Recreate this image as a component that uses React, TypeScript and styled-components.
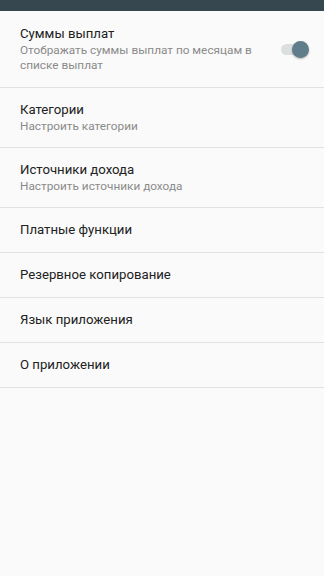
import React from 'react'
import styled, { createGlobalStyle } from 'styled-components'

type Setting = {
  title: string
  summary?: string
  toggle?: boolean
}

const settings: Setting[] = [
  {
    title: 'Суммы выплат',
    summary: 'Отображать суммы выплат по месяцам в списке выплат',
    toggle: true,
  },
  { title: 'Категории', summary: 'Настроить категории' },
  { title: 'Источники дохода', summary: 'Настроить источники дохода' },
  { title: 'Платные функции' },
  { title: 'Резервное копирование' },
  { title: 'Язык приложения' },
  { title: 'О приложении' },
]

const App: React.FC = () => {
  return (
    <>
      <GlobalStyle />
      <Screen>
        <StatusBar />
        <List>
          {settings.map((item) => (
            <Row key={item.title} $withSwitch={!!item.toggle}>
              <Texts>
                <Title>{item.title}</Title>
                {item.summary && <Summary>{item.summary}</Summary>}
              </Texts>
              {item.toggle && (
                <Switch>
                  <Track />
                  <Knob />
                </Switch>
              )}
            </Row>
          ))}
        </List>
      </Screen>
    </>
  )
}

export default App

const GlobalStyle = createGlobalStyle`
  html, body {
    margin: 0;
    padding: 0;
    background: #fafafa;
  }
  body {
    font-family: Roboto, 'Noto Sans', 'Liberation Sans', sans-serif;
  }
`

const Screen = styled.div`
  width: 324px;
  height: 576px;
  background: #fafafa;
  display: flex;
  flex-direction: column;
`

const StatusBar = styled.div`
  height: 11px;
  background: #37474f;
  flex-shrink: 0;
`

const List = styled.ul`
  list-style: none;
  margin: 0;
  padding: 0;
`

const Row = styled.li<{ $withSwitch: boolean }>`
  display: flex;
  align-items: center;
  padding: ${(p) => (p.$withSwitch ? '14px 15px 14px 20px' : '13px 15px 13px 20px')};
  border-bottom: 1px solid #e2e2e2;
`

const Texts = styled.div`
  flex: 1;
  min-width: 0;
  padding-right: 18px;
`

const Title = styled.div`
  font-size: 13.2px;
  line-height: 18px;
  color: #212121;
`

const Summary = styled.div`
  font-size: 11.8px;
  line-height: 15px;
  color: #8a8a8a;
`

const Switch = styled.div`
  position: relative;
  width: 28px;
  height: 17px;
  flex-shrink: 0;
`

const Track = styled.div`
  position: absolute;
  left: 0;
  top: 3px;
  width: 27px;
  height: 11px;
  border-radius: 6px;
  background: #dcdfe0;
`

const Knob = styled.div`
  position: absolute;
  right: 0;
  top: 0;
  width: 17px;
  height: 17px;
  border-radius: 50%;
  background: #607d8b;
  box-shadow: 0 1px 2px rgba(0, 0, 0, 0.3);
`
